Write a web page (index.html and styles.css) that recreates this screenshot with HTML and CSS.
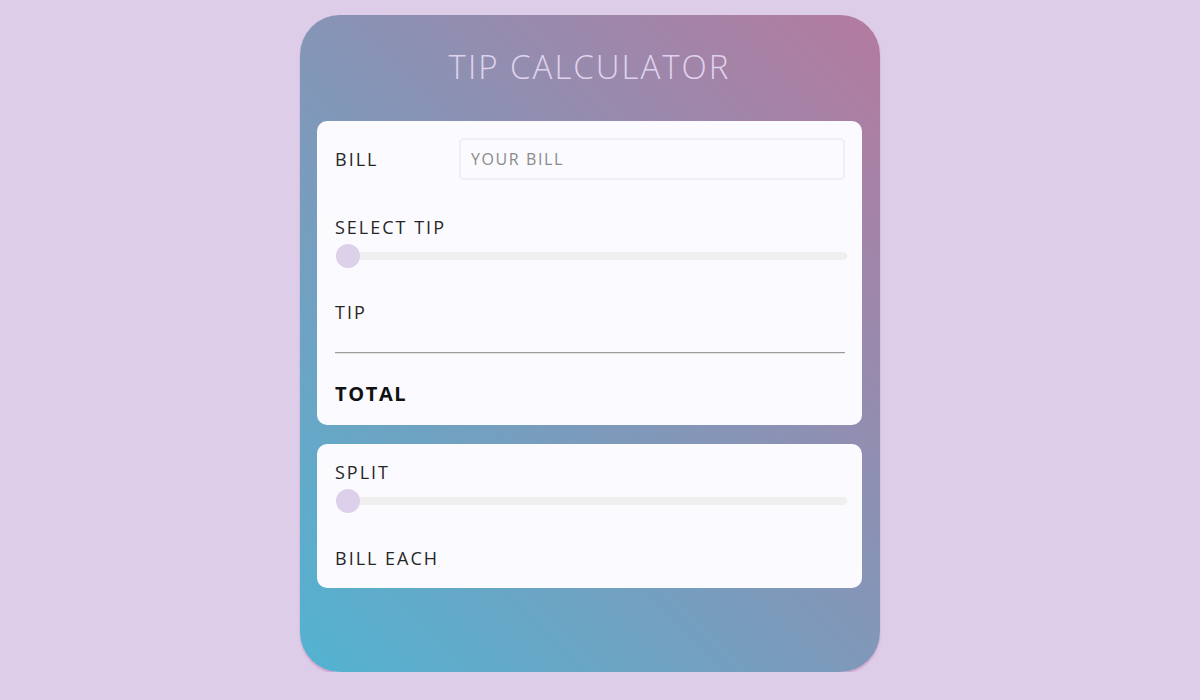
FILE: index.html
```html
<!DOCTYPE html>
<html lang="en">
<head>
<meta charset="utf-8">
<title>Tip Calculator</title>
<link rel="stylesheet" href="styles.css">
</head>
<body>
<main class="calc">
  <h1 class="title">TIP CALCULATOR</h1>
  <section class="card card-main">
    <div class="bill-row">
      <label class="label" for="bill">BILL</label>
      <input class="bill-input" id="bill" type="text" placeholder="YOUR BILL">
    </div>
    <div class="field">
      <label class="label" for="tip">SELECT TIP</label>
      <input class="range" id="tip" type="range" min="0" max="100" value="0">
    </div>
    <div class="label tip-label">TIP</div>
    <hr class="divider">
    <div class="total">TOTAL</div>
  </section>
  <section class="card card-split">
    <div class="field">
      <label class="label" for="split">SPLIT</label>
      <input class="range" id="split" type="range" min="1" max="20" value="1">
    </div>
    <div class="label each-label">BILL EACH</div>
  </section>
</main>
</body>
</html>
```

FILE: styles.css
```css
* { box-sizing: border-box; }

html, body {
  margin: 0;
  padding: 0;
  background: #ddcde8;
  font-family: "Open Sans", "Noto Sans", sans-serif;
}

.calc {
  width: 580px;
  height: 657px;
  margin: 15px 0 0 calc(50% - 300px);
  padding: 0 18px 0 17px;
  border-radius: 40px;
  background: linear-gradient(45deg, #52b3d1 0%, #b47a9f 100%);
  box-shadow: 0 2px 2px rgba(196, 120, 178, 0.55);
  display: flex;
  flex-direction: column;
}

.title {
  margin: 31px 0 0;
  height: 42px;
  line-height: 42px;
  text-align: center;
  font-size: 33px;
  font-weight: 300;
  color: #e0d3ec;
  letter-spacing: 2px;
}

.card {
  background: #fbfaff;
  border-radius: 10px;
  padding: 0 17px 0 18px;
  display: flex;
  flex-direction: column;
}

.card-main {
  margin-top: 33px;
  height: 304px;
  padding-top: 17px;
}

.card-split {
  margin-top: 19px;
  height: 144px;
  padding-top: 17px;
}

.label {
  font-size: 18px;
  line-height: 22px;
  letter-spacing: 2px;
  color: #262626;
  font-weight: 400;
}

.bill-row {
  display: grid;
  grid-template-columns: 124px 1fr;
  align-items: center;
  height: 42px;
}

.bill-input {
  height: 42px;
  width: 100%;
  border: 2px solid #f0eff4;
  border-radius: 5px;
  background: #fbfaff;
  padding: 0 10px;
  font-family: inherit;
  font-size: 16px;
  letter-spacing: 1.6px;
  color: #333;
  outline: none;
}

.bill-input::placeholder { color: #8a8a8a; }

.field {
  display: flex;
  flex-direction: column;
  gap: 6px;
}

.card-main .field { margin-top: 36px; }

.range {
  -webkit-appearance: none;
  appearance: none;
  width: 511px;
  height: 24px;
  margin: 0 0 0 1px;
  background: transparent;
}

.range::-webkit-slider-runnable-track {
  height: 8px;
  border-radius: 4px;
  background: #efefef;
}

.range::-webkit-slider-thumb {
  -webkit-appearance: none;
  appearance: none;
  width: 24px;
  height: 24px;
  border-radius: 50%;
  background: #ddd0ea;
  margin-top: -8px;
  border: none;
}

.range::-moz-range-track {
  height: 8px;
  border-radius: 4px;
  background: #efefef;
}

.range::-moz-range-thumb {
  width: 24px;
  height: 24px;
  border-radius: 50%;
  background: #ddd0ea;
  border: none;
}

.tip-label { margin-top: 33px; }

.divider {
  margin: 29px 0 0;
  border: 0;
  border-top: 1px solid #9a9a9a;
  border-bottom: 1px solid #e4e4e4;
  height: 0;
}

.total {
  margin-top: 28px;
  font-size: 20px;
  line-height: 24px;
  letter-spacing: 1.6px;
  font-weight: 700;
  color: #111;
}

.each-label { margin-top: 34px; }
```
